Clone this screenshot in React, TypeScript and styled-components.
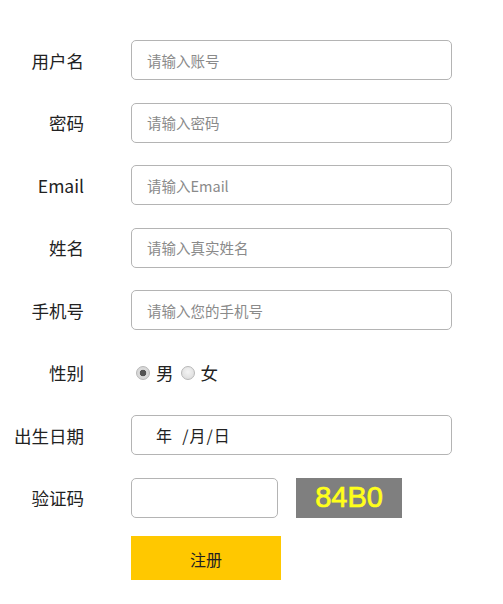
import React from "react";
import styled, { createGlobalStyle } from "styled-components";

const Global = createGlobalStyle`
  html, body { margin: 0; padding: 0; background: #fff; }
  body { font-family: "Noto Sans CJK SC", "Noto Sans", sans-serif; color: #222; }
`;

const Form = styled.form`
  display: grid;
  grid-template-columns: 84px 321px;
  column-gap: 47px;
  row-gap: 22.5px;
  padding-top: 40px;
  grid-auto-rows: 40px;
`;

const Label = styled.label`
  display: flex;
  align-items: center;
  justify-content: flex-end;
  font-size: 17.5px;
  color: #222;
  white-space: nowrap;
`;

const Field = styled.div`
  display: flex;
  align-items: center;
  gap: 18px;
`;

const TextInput = styled.input<{ $w?: number }>`
  box-sizing: border-box;
  width: ${(p) => (p.$w ? `${p.$w}px` : "100%")};
  height: 40px;
  border: 1.5px solid #b4b4b4;
  border-radius: 5px;
  padding: 0 15px;
  font-family: "Noto Sans CJK SC", "Noto Sans", sans-serif;
  font-size: 14.5px;
  color: #222;
  outline: none;
  &::placeholder { color: #8a8a8a; }
`;

const DateBox = styled.div`
  box-sizing: border-box;
  width: 100%;
  height: 40px;
  border: 1.5px solid #b4b4b4;
  border-radius: 5px;
  padding: 0 24px;
  display: flex;
  align-items: center;
  font-size: 16px;
  letter-spacing: 1px;
  color: #222;
  white-space: pre;
`;

const RadioGroup = styled.div`
  display: flex;
  align-items: center;
  padding-left: 5px;
  font-size: 17.5px;
  color: #222;
`;

const RadioOption = styled.label`
  display: flex;
  align-items: center;
  gap: 6px;
  margin-right: 7px;
`;

const Radio = styled.input`
  appearance: none;
  margin: 0;
  width: 14px;
  height: 14px;
  border-radius: 50%;
  border: 1px solid #b8b8b8;
  background: radial-gradient(circle at 50% 40%, #f4f4f4 0%, #d8d8d8 100%);
  &:checked {
    background: radial-gradient(circle, #555 0 3px, #dcdcdc 3.6px, #d0d0d0 100%);
  }
`;

const Captcha = styled.div`
  width: 106px;
  height: 40px;
  background: #7f7f7f;
  color: #ffff1a;
  font-family: "Liberation Sans", Arial, sans-serif;
  font-weight: 400;
  font-size: 29px;
  -webkit-text-stroke: 0.7px #ffff1a;
  display: flex;
  align-items: center;
  justify-content: center;
`;

const Submit = styled.button`
  width: 150px;
  height: 45px;
  margin-top: -3px;
  border: none;
  background: #ffc800;
  font-family: "Noto Sans CJK SC", "Noto Sans", sans-serif;
  font-size: 16px;
  color: #222;
  cursor: pointer;
`;

const Spacer = styled.div``;

const rows = [
  { label: "用户名", ph: "请输入账号" },
  { label: "密码", ph: "请输入密码" },
  { label: "Email", ph: "请输入Email" },
  { label: "姓名", ph: "请输入真实姓名" },
  { label: "手机号", ph: "请输入您的手机号" },
];

export default function App() {
  return (
    <>
      <Global />
      <Form onSubmit={(e) => e.preventDefault()}>
        {rows.map((r) => (
          <React.Fragment key={r.label}>
            <Label>{r.label}</Label>
            <Field>
              <TextInput placeholder={r.ph} />
            </Field>
          </React.Fragment>
        ))}
        <Label>性别</Label>
        <RadioGroup>
          <RadioOption>
            <Radio type="radio" name="sex" defaultChecked />
            男
          </RadioOption>
          <RadioOption>
            <Radio type="radio" name="sex" />
            女
          </RadioOption>
        </RadioGroup>
        <Label>出生日期</Label>
        <DateBox>年  /月/日</DateBox>
        <Label>验证码</Label>
        <Field>
          <TextInput $w={147} />
          <Captcha>84B0</Captcha>
        </Field>
        <Spacer />
        <Field>
          <Submit type="submit">注册</Submit>
        </Field>
      </Form>
    </>
  );
}
